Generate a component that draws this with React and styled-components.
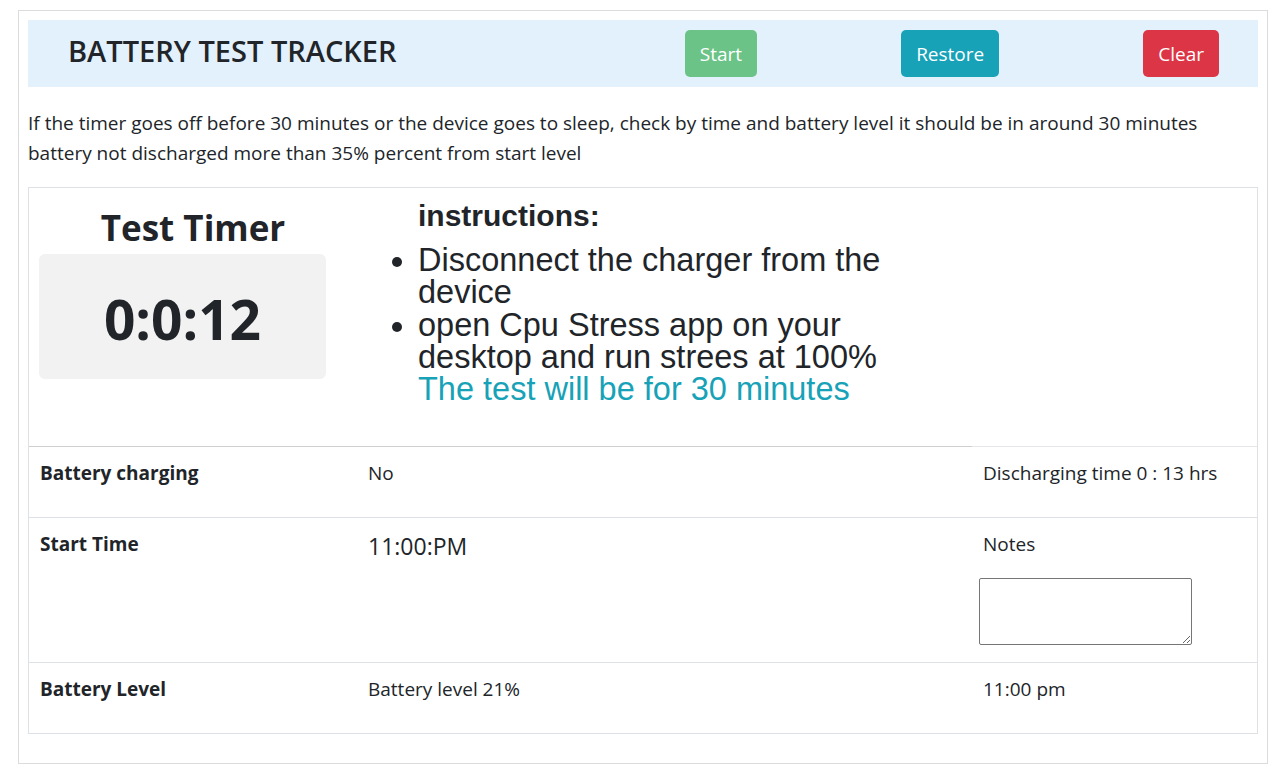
import React from 'react'
import styled, { createGlobalStyle } from "styled-components";

const GlobalStyle = createGlobalStyle`
  body {
    margin: 0;
    background: #fff;
    color: #212529;
    font-family: "Open Sans", "Noto Sans", sans-serif;
  }
`;

const App = () => {
  return (
    <Page>
      <GlobalStyle />
      <Card>
        <Header>
          <Title>BATTERY TEST TRACKER</Title>
          <Actions>
            <Button $variant="start">Start</Button>
            <Button $variant="restore">Restore</Button>
            <Button $variant="clear">Clear</Button>
          </Actions>
        </Header>
        <Notice>
          If the timer goes off before 30 minutes or the device goes to sleep, check by time and battery level it should be in around 30 minutes
          <br />
          battery not discharged more than 35% percent from start level
        </Notice>
        <Table>
          <TopCell>
            <TimerBlock>
              <TimerTitle>Test Timer</TimerTitle>
              <TimerBox>0:0:12</TimerBox>
            </TimerBlock>
            <Instructions>
              <h4>instructions:</h4>
              <ul>
                <li>Disconnect the charger from the device</li>
                <li>
                  open Cpu Stress app on your desktop and run strees at 100%
                  <Info>The test will be for 30 minutes</Info>
                </li>
              </ul>
            </Instructions>
          </TopCell>
          <TopSide />

          <Cell $first $label>Battery charging</Cell>
          <Cell $first>No</Cell>
          <Cell $first>Discharging time 0 : 13 hrs</Cell>

          <Cell $tall $label>Start Time</Cell>
          <Cell $tall>
            <BigTime>11:00:PM</BigTime>
          </Cell>
          <Cell $tall>
            Notes
            <Notes />
          </Cell>

          <Cell $label>Battery Level</Cell>
          <Cell>Battery level 21%</Cell>
          <Cell>11:00 pm</Cell>
        </Table>
      </Card>
    </Page>
  );
};

const Page = styled.div`
  padding: 10px 10px 0 18px;
`;

const Card = styled.div`
  border: 1px solid #dcdcdc;
  padding: 9px 9px 29px;
`;

const Header = styled.div`
  display: flex;
  align-items: center;
  height: 67px;
  background: #e3f1fc;
  padding: 0 39px 0 40px;
`;

const Title = styled.h3`
  margin: 0 0 6px;
  font-size: 29px;
  font-weight: 600;
  color: #212529;
`;

const Actions = styled.div`
  margin-left: auto;
  display: flex;
  gap: 144px;
`;

const colors = {
  start: "#6bc387",
  restore: "#17a2b8",
  clear: "#dc3545",
};

const Button = styled.button`
  height: 47px;
  padding: 0 15px;
  border: none;
  border-radius: 5px;
  background: ${(p) => colors[p.$variant]};
  color: #fff;
  font-family: inherit;
  font-size: 19px;
  cursor: pointer;
`;

const Notice = styled.p`
  margin: 21px 0 19px;
  font-size: 19px;
  line-height: 30px;
  white-space: nowrap;
`;

const Table = styled.div`
  display: grid;
  grid-template-columns: 328px 615px 1fr;
  border: 1px solid #dee2e6;
`;

const TopCell = styled.div`
  grid-column: 1 / 3;
  display: flex;
  height: 259px;
  box-sizing: border-box;
  border-bottom: 1px solid #cfcfcf;
`;

const TopSide = styled.div`
  border-bottom: 1px solid #e4e6ea;
`;

const TimerBlock = styled.div`
  width: 328px;
  flex-shrink: 0;
`;

const TimerTitle = styled.h1`
  margin: 18px 0 4px;
  font-size: 35px;
  line-height: 44px;
  font-weight: 700;
  text-align: center;
`;

const TimerBox = styled.div`
  width: 287px;
  height: 125px;
  margin-left: 10px;
  background: #f2f2f2;
  border-radius: 6px;
  display: flex;
  align-items: center;
  justify-content: center;
  font-size: 55px;
  font-weight: 700;
  padding-top: 4px;
  box-sizing: border-box;
`;

const Instructions = styled.div`
  width: 510px;
  padding-left: 21px;
  font-family: "Liberation Sans", Arial, sans-serif;
  h4 {
    margin: 11px 0 11px 40px;
    font-size: 30px;
    line-height: 34px;
    font-weight: 700;
  }
  ul {
    margin: 0;
    padding-left: 40px;
    font-size: 32.5px;
    line-height: 32.3px;
  }
`;

const Info = styled.span`
  display: block;
  color: #17a2b8;
`;

const Cell = styled.div`
  padding: 13px 11px 0;
  height: ${(p) => (p.$tall ? "145px" : p.$first ? "70px" : "71px")};
  box-sizing: border-box;
  border-top: ${(p) => (p.$first ? "none" : "1px solid #dee2e6")};
  font-size: 19px;
  line-height: 27px;
  font-weight: ${(p) => (p.$label ? 700 : 400)};
`;

const BigTime = styled.div`
  font-size: 23px;
  line-height: 31px;
`;

const Notes = styled.textarea`
  display: block;
  margin: 20px 0 0 -4px;
  width: 213px;
  height: 67px;
  box-sizing: border-box;
  border: 1px solid #767676;
  border-radius: 2px;
  resize: both;
`;

export default App;
